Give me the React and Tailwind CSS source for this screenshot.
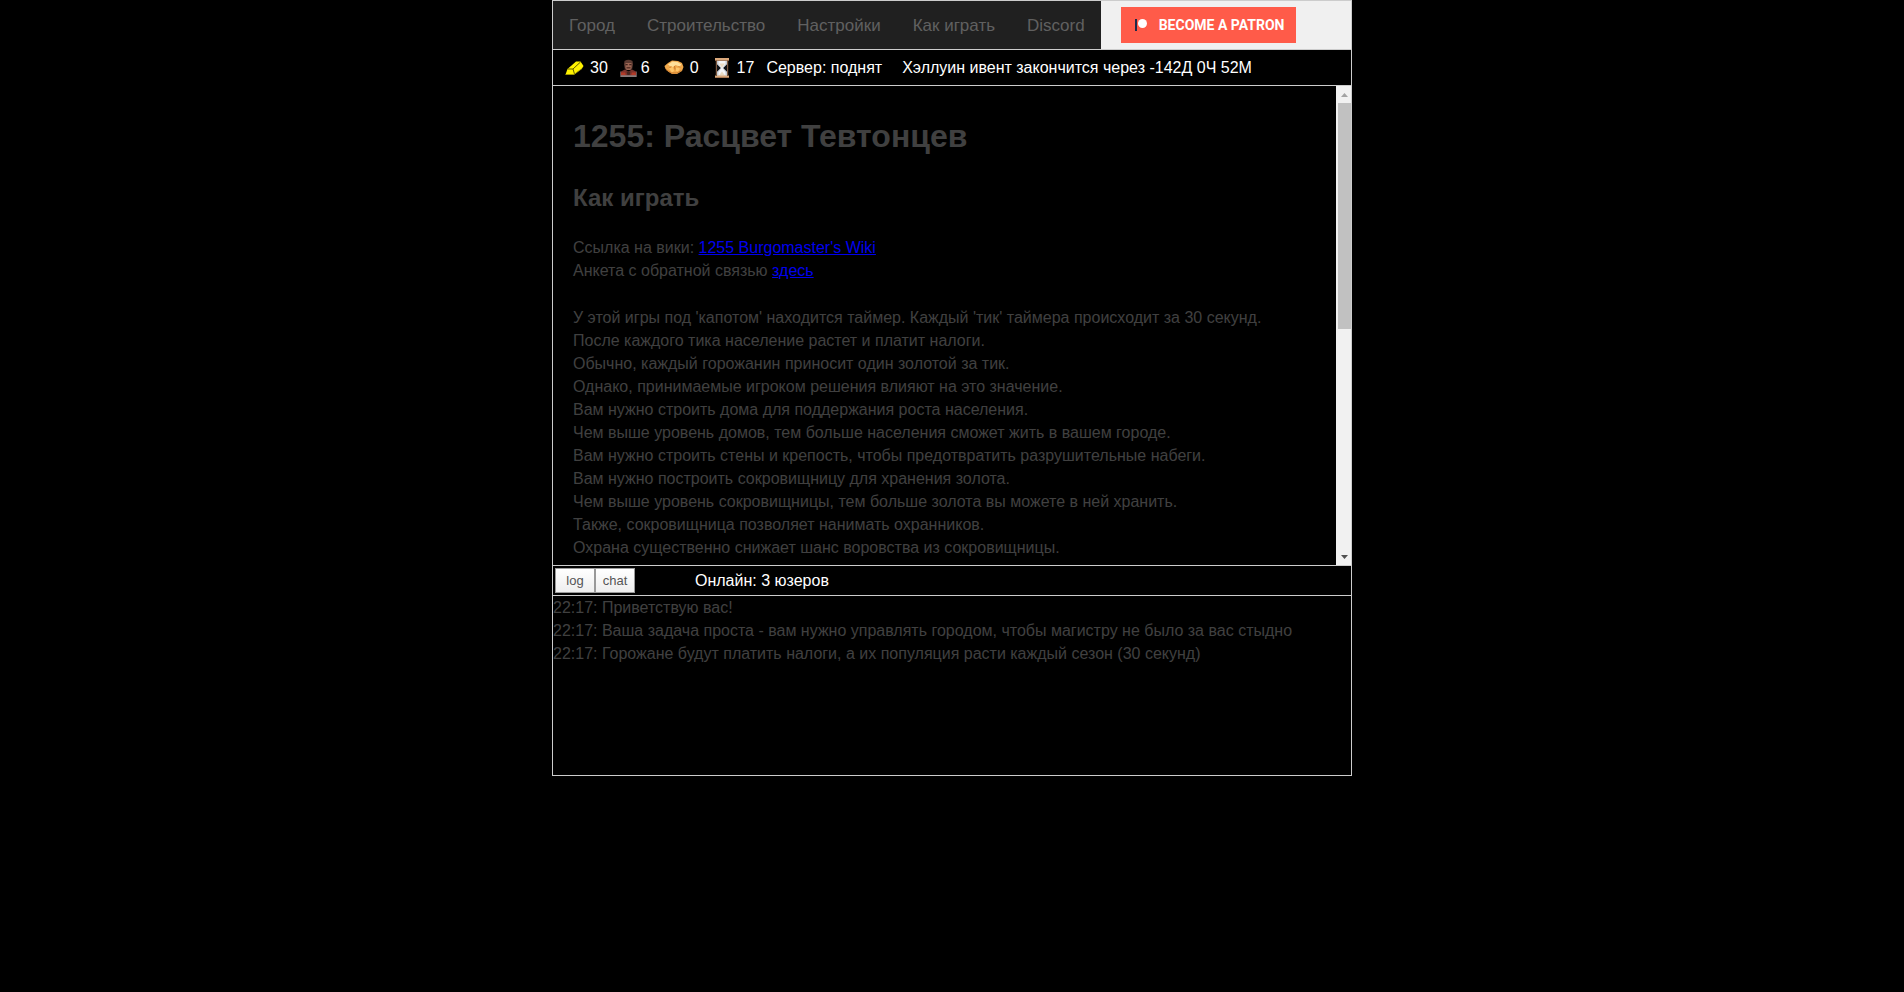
const navItems = ['Город', 'Строительство', 'Настройки', 'Как играть', 'Discord'];

const helpLines = [
  "У этой игры под 'капотом' находится таймер. Каждый 'тик' таймера происходит за 30 секунд.",
  'После каждого тика население растет и платит налоги.',
  'Обычно, каждый горожанин приносит один золотой за тик.',
  'Однако, принимаемые игроком решения влияют на это значение.',
  'Вам нужно строить дома для поддержания роста населения.',
  'Чем выше уровень домов, тем больше населения сможет жить в вашем городе.',
  'Вам нужно строить стены и крепость, чтобы предотвратить разрушительные набеги.',
  'Вам нужно построить сокровищницу для хранения золота.',
  'Чем выше уровень сокровищницы, тем больше золота вы можете в ней хранить.',
  'Также, сокровищница позволяет нанимать охранников.',
  'Охрана существенно снижает шанс воровства из сокровищницы.',
];

const logLines = [
  '22:17: Приветствую вас!',
  '22:17: Ваша задача проста - вам нужно управлять городом, чтобы магистру не было за вас стыдно',
  '22:17: Горожане будут платить налоги, а их популяция расти каждый сезон (30 секунд)',
];

function GoldIcon() {
  return (
    <svg width="19" height="16" viewBox="0 0 19 16" aria-hidden="true">
      <path d="M.5 14.500 2.500 9 11 1.500h4.500l3 4.500-1.500 2.500-8 6z" fill="#fff200" />
      <path d="M2.500 9H8l7.500-7M8 9l1.500 5" fill="none" stroke="#4d4700" strokeWidth="0.9" />
      <path d="M.5 14.500h8.500l8-6" fill="none" stroke="#a89e00" strokeWidth="0.8" />
    </svg>
  );
}

function CitizenIcon() {
  return (
    <svg width="17" height="18" viewBox="0 0 17 18" aria-hidden="true">
      <path d="M4.500 2Q8.500-.5 12.500 2l.5 3.500-1 5H5L4 5.500z" fill="#5b3a31" />
      <path d="M5.500 4h6v4.500l-1 2.500h-4l-1-2.500z" fill="#9a6553" />
      <path d="M5.500 5h2.200v1.200H5.500zM9.300 5h2.200v1.200H9.300z" fill="#42251f" />
      <path d="M6.500 8h4v1.500h-4z" fill="#5a3229" />
      <path d="M1 12.500 5 10.500l3.500 2 3.500-2 4 2 .5 4.500H.5z" fill="#7c332c" />
      <path d="M1 13.500h4l1 3H.8zM12 13.500h3.700l.5 3H11z" fill="#b33a28" />
      <path d="M6.500 12.500h4l-1 4h-2z" fill="#45251f" />
      <path d="M.5 16.200h16V18H.5z" fill="#8a7c7c" />
      <path d="M0 12.500h1V18H0zM16 12.500h1V18h-1z" fill="#5f4f50" />
    </svg>
  );
}

function BreadIcon() {
  return (
    <svg width="20" height="15" viewBox="0 0 20 15" aria-hidden="true">
      <path d="M.5 6 4 3l4-2.500 6 .5 4 2 1.500 4-1.500 4-5 3H8l-4-2.500L1.500 9z" fill="#f0a84b" />
      <path d="M4 4.500 8.500 1.500l5 .5 4 2.500-2 2-4-1.500-2.500 2-3-1z" fill="#ffe09a" />
      <path d="M5 8.500 9 7l1 4-2 1.500zM12 7.500l4 1-2 3-2-.5z" fill="#ffc669" />
      <path d="m10.500 6 .5 3.500M7 6.500 5.500 8M14.500 6l1.500 1.500M2 9.500l5.500 3.500h5.500l4.500-2.500" fill="none" stroke="#c47428" strokeWidth="0.9" />
    </svg>
  );
}

function HourglassIcon() {
  return (
    <svg width="14" height="20" viewBox="0 0 14 20" aria-hidden="true">
      <path d="M2 2h10v4.500L8.500 10l3.500 3.500V18H2v-4.500L5.500 10 2 6.500z" fill="#c6ccd4" />
      <path d="M3.500 3h7v3L7.500 10l3 4v3.500h-7V14l3-4-3-4z" fill="#f5f6f8" />
      <path d="M4 5.500h6L7 9.500zM7 13.500l3 4H4z" fill="#eadbc4" />
      <path d="M2 6.500 5.500 10 2 13.500zM12 6.500 8.500 10l3.500 3.500z" fill="#111317" />
      <path d="M.8 3h1.200v14H.8zM12 3h1.200v14H12z" fill="#7d5940" />
      <path d="M0 0h14v2.500H0zM0 17.500h14V20H0z" fill="#dba97c" />
      <path d="M0 2h14v.8H0zM0 19.200h14v.8H0z" fill="#9a6c4a" />
    </svg>
  );
}

function Scrollbar() {
  return (
    <div className="flex w-[15px] shrink-0 flex-col bg-[#f1f1f1]" aria-hidden="true">
      <svg className="h-[17px] w-full" viewBox="0 0 15 17">
        <path d="M5 11h7L8.500 7z" fill="#a3a3a3" />
      </svg>
      <div className="ml-0.5 h-[226px] bg-[#c1c1c1]" />
      <svg className="mt-auto h-[17px] w-full" viewBox="0 0 15 17">
        <path d="M5 7h7L8.500 11z" fill="#505050" />
      </svg>
    </div>
  );
}

export default function App() {
  return (
    <div className="min-h-screen bg-black font-['Liberation_Sans',Arial,sans-serif] text-base leading-[23px] text-[#404040]">
      <div className="mx-auto flex max-w-[800px] flex-col divide-y divide-[#ccc] border border-[#ccc]">
        <header className="flex bg-[#f0f0f0]">
          <nav className="flex bg-[#202020] text-[17px] text-[#606060]">
            {navItems.map((item) => (
              <a key={item} href="#" className="flex h-12 items-center px-4">
                {item}
              </a>
            ))}
          </nav>
          <a
            href="#"
            className="my-1.5 ml-5 flex h-9 w-[175px] items-center bg-[#ff5b49] pl-3.5 font-[Roboto,'Liberation_Sans',sans-serif] text-sm font-bold text-white"
          >
            <svg className="mr-3" width="12" height="12" viewBox="0 0 12 12" aria-hidden="true">
              <path d="M0 0h2v12H0z" fill="#1c2a4a" />
              <circle cx="7.500" cy="4.500" r="4.500" fill="#fff" />
            </svg>
            BECOME A PATRON
          </a>
        </header>

        <section className="flex h-9 items-center whitespace-nowrap pl-3 text-white">
          <span className="mr-3 flex items-center gap-1.5">
            <GoldIcon />
            30
          </span>
          <span className="mr-3.5 flex items-center gap-1">
            <CitizenIcon />6
          </span>
          <span className="mr-4 flex items-center gap-1.5">
            <BreadIcon />0
          </span>
          <span className="mr-3 flex items-center gap-2">
            <HourglassIcon />
            17
          </span>
          <span className="mr-5">Сервер: поднят</span>
          <span>Хэллуин ивент закончится через -142Д 0Ч 52М</span>
        </section>

        <main className="flex h-[480px]">
          <div className="min-w-0 flex-1 overflow-hidden px-5 pt-7">
            <h1 className="text-[32px] font-bold leading-[44px]">1255: Расцвет Тевтонцев</h1>
            <h2 className="mt-[22px] text-2xl font-bold leading-9">Как играть</h2>
            <p className="mt-5">
              Ссылка на вики:{' '}
              <a href="#" className="text-[#0000ee] underline">
                1255 Burgomaster's Wiki
              </a>
              <br />
              Анкета с обратной связью{' '}
              <a href="#" className="text-[#0000ee] underline">
                здесь
              </a>
            </p>
            <div className="mt-6">
              {helpLines.map((line) => (
                <p key={line}>{line}</p>
              ))}
            </div>
          </div>
          <Scrollbar />
        </main>

        <section className="flex h-[30px] items-center pl-0.5">
          {['log', 'chat'].map((label) => (
            <button
              key={label}
              type="button"
              className="h-[25px] w-10 border border-[#999] bg-linear-to-b from-white to-[#eee] text-[13px] leading-[15px] text-[#555]"
            >
              {label}
            </button>
          ))}
          <span className="ml-[60px] text-white">Онлайн: 3 юзеров</span>
        </section>

        <section className="h-[179px]">
          {logLines.map((line) => (
            <p key={line}>{line}</p>
          ))}
        </section>
      </div>
    </div>
  );
}
